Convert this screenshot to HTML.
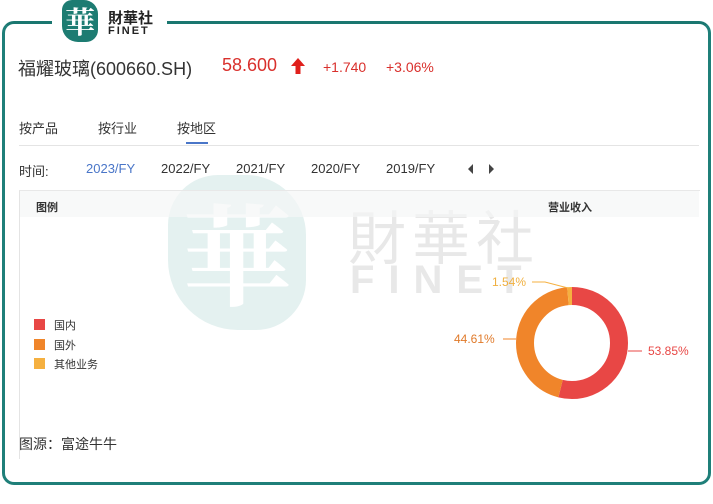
<!DOCTYPE html>
<html><head><meta charset="utf-8"><style>
body{margin:0;width:713px;height:504px;background:#fff;font-family:"Liberation Sans","Noto Sans CJK SC",sans-serif;position:relative;overflow:hidden}
.a{position:absolute;white-space:nowrap}
</style></head><body>
<div class="a" style="left:2px;top:21px;width:703px;height:458px;border:3px solid #1f7f79;border-radius:12px;border-top-color:#1a7770"></div>
<div class="a" style="left:52px;top:14px;width:115px;height:16px;background:#fff"></div>
<div class="a" style="left:62px;top:0;width:36px;height:42px;background:#1d7c72;border-radius:10px 14px 12px 16px;color:#fff;font:bold 30px 'Noto Serif CJK SC',serif;text-align:center;line-height:40px">華</div>
<div class="a" style="left:108px;top:10px;font:bold 15px 'Noto Sans CJK SC',sans-serif;color:#222;line-height:16px">財華社</div>
<div class="a" style="left:108px;top:25px;font:bold 11px 'Liberation Sans',sans-serif;color:#222;letter-spacing:2px">FINET</div>
<!-- watermark -->
<div class="a" style="left:168px;top:175px;width:138px;height:155px;background:#e4f1f0;border-radius:50px 60px 50px 70px;color:#fff;font:bold 110px 'Noto Serif CJK SC',serif;text-align:center;line-height:150px">華</div>
<div class="a" style="left:348px;top:204px;font:58px 'Noto Sans CJK SC',sans-serif;color:#e8e8e8;line-height:60px;letter-spacing:6px">財華社</div>
<div class="a" style="left:350px;top:262px;font:bold 40px 'Liberation Sans',sans-serif;color:#e8e8e8;letter-spacing:14px;line-height:36px">FINET</div>
<div class="a" style="left:18px;top:55px;font-size:18px;color:#333">福耀玻璃(600660.SH)</div>
<div class="a" style="left:222px;top:55px;font-size:18px;color:#d9302c">58.600</div>
<svg class="a" style="left:290px;top:57px" width="16" height="18"><path d="M8 1 L15 9 L10.5 9 L10.5 17 L5.5 17 L5.5 9 L1 9Z" fill="#e0201c"/></svg>
<div class="a" style="left:323px;top:59px;font-size:14px;color:#d9302c">+1.740</div>
<div class="a" style="left:386px;top:59px;font-size:14px;color:#d9302c">+3.06%</div>
<div class="a" style="left:19px;top:118px;font-size:13px;color:#333">按产品</div>
<div class="a" style="left:98px;top:118px;font-size:13px;color:#333">按行业</div>
<div class="a" style="left:177px;top:118px;font-size:13px;color:#333">按地区</div>
<div class="a" style="left:186px;top:142px;width:22px;height:2px;background:#4a76c8"></div>
<div class="a" style="left:19px;top:145px;width:680px;height:1px;background:#e4e4e4"></div>
<div class="a" style="left:19px;top:161px;font-size:13px;color:#333">时间:</div>
<div class="a" style="left:86px;top:161px;font-size:13px;color:#4a76c8">2023/FY</div>
<div class="a" style="left:161px;top:161px;font-size:13px;color:#333">2022/FY</div>
<div class="a" style="left:236px;top:161px;font-size:13px;color:#333">2021/FY</div>
<div class="a" style="left:311px;top:161px;font-size:13px;color:#333">2020/FY</div>
<div class="a" style="left:386px;top:161px;font-size:13px;color:#333">2019/FY</div>
<svg class="a" style="left:466px;top:163px" width="30" height="12"><path d="M7 1 L2 6 L7 11Z M23 1 L28 6 L23 11Z" fill="#444"/></svg>
<div class="a" style="left:19px;top:190px;width:680px;height:268px;border-left:1px solid #e4e4e4;border-top:1px solid #e8e8e8"></div>
<div class="a" style="left:20px;top:191px;width:679px;height:26px;background:rgba(245,247,247,0.7)"></div>
<div class="a" style="left:36px;top:199px;font-size:11px;font-weight:bold;color:#333">图例</div>
<div class="a" style="left:548px;top:199px;font-size:11px;font-weight:bold;color:#333">营业收入</div>
<div class="a" style="left:34px;top:319px;width:11px;height:11px;background:#e84745"></div>
<div class="a" style="left:54px;top:317px;font-size:11px;color:#333">国内</div>
<div class="a" style="left:34px;top:339px;width:11px;height:11px;background:#f0852a"></div>
<div class="a" style="left:54px;top:337px;font-size:11px;color:#333">国外</div>
<div class="a" style="left:34px;top:358px;width:11px;height:11px;background:#f5b040"></div>
<div class="a" style="left:54px;top:356px;font-size:11px;color:#333">其他业务</div>
<svg class="a" style="left:0;top:0" width="713" height="504">
<g transform="rotate(-90 572 343)" fill="none" stroke-width="18">
<circle cx="572" cy="343" r="47" stroke="#e84745" stroke-dasharray="159.0 400"/>
<circle cx="572" cy="343" r="47" stroke="#f0852a" stroke-dasharray="0 159.0 131.7 400"/>
<circle cx="572" cy="343" r="47" stroke="#f5b040" stroke-dasharray="0 290.7 4.6 400"/>
</g>
<path d="M628 351 L642 351" stroke="#e84745"/>
<path d="M503 339 L516 339" stroke="#f0852a"/>
<path d="M532 282 L545 282 L568 288" stroke="#f5b040" fill="none"/>
<text x="648" y="355" font-size="12" fill="#e84745" font-family="Liberation Sans">53.85%</text>
<text x="454" y="343" font-size="12" fill="#e07a2a" font-family="Liberation Sans">44.61%</text>
<text x="492" y="286" font-size="12" fill="#f0b040" font-family="Liberation Sans">1.54%</text>
</svg>
<div class="a" style="left:19px;top:434px;font-size:14px;color:#333">图源：富途牛牛</div>
</body></html>
